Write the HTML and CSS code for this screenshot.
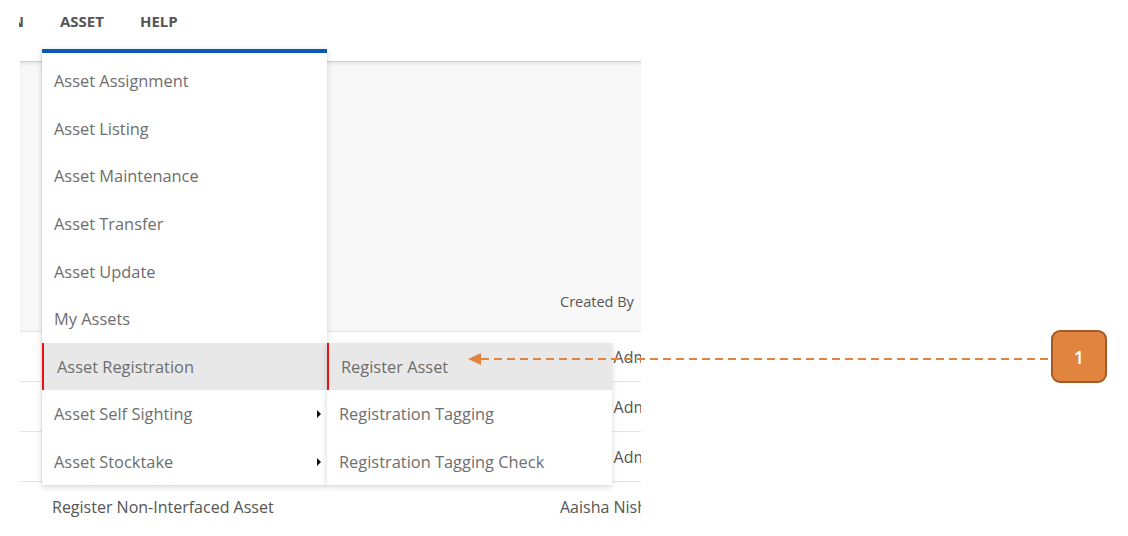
FILE: index.html
```html
<!DOCTYPE html>
<html>
<head>
<meta charset="utf-8">
<link rel="stylesheet" href="styles.css">
</head>
<body>
<div class="page">
  <nav class="topnav">
    <span class="nav-clip"><span>N</span></span>
    <span class="nav-item">ASSET</span>
    <span class="nav-item">HELP</span>
  </nav>

  <section class="panel">
    <div class="panel-head">
      <div class="col-name"></div>
      <div class="col-by">Created By</div>
    </div>
    <div class="row"><div class="col-name">Register Asset</div><div class="col-by">Aaisha Admin</div></div>
    <div class="row"><div class="col-name">Registration Tagging</div><div class="col-by">Aaisha Admin</div></div>
    <div class="row"><div class="col-name">Registration Tagging Check</div><div class="col-by">Aaisha Admin</div></div>
    <div class="row last"><div class="col-name">Register Non-Interfaced Asset</div><div class="col-by">Aaisha Nisha</div></div>
  </section>

  <ul class="menu">
    <li class="item">Asset Assignment</li>
    <li class="item">Asset Listing</li>
    <li class="item">Asset Maintenance</li>
    <li class="item">Asset Transfer</li>
    <li class="item">Asset Update</li>
    <li class="item">My Assets</li>
    <li class="item active">Asset Registration
      <ul class="submenu">
        <li class="item active">Register Asset</li>
        <li class="item">Registration Tagging</li>
        <li class="item">Registration Tagging Check</li>
      </ul>
    </li>
    <li class="item has-sub">Asset Self Sighting<span class="caret"></span></li>
    <li class="item has-sub">Asset Stocktake<span class="caret"></span></li>
  </ul>

  <div class="callout">
    <span class="arrowhead"></span>
    <span class="dash"></span>
    <span class="badge">1</span>
  </div>
</div>
</body>
</html>
```

FILE: styles.css
```css
* { box-sizing: border-box; }
html, body {
  margin: 0;
  padding: 0;
  background: #ffffff;
}
body {
  width: 1128px;
  height: 536px;
  overflow: hidden;
  font-family: "Open Sans", "Noto Sans", sans-serif;
}
.page {
  position: relative;
  width: 1128px;
  height: 536px;
}

/* top navigation */
.topnav {
  height: 41px;
  display: flex;
  align-items: center;
  padding-left: 19px;
  gap: 36px;
  font-weight: 700;
  font-size: 15px;
  color: #555555;
}
.nav-clip {
  display: inline-block;
  width: 5px;
  overflow: hidden;
  direction: rtl;
  white-space: nowrap;
}
.nav-clip span { direction: ltr; }
.nav-item { line-height: 18px; }

/* content panel */
.panel {
  margin-top: 20px;
  margin-left: 20px;
  width: 621px;
  overflow: hidden;
  font-size: 16px;
  color: #555555;
}
.panel-head {
  height: 271px;
  background: #f8f8f8;
  display: flex;
  align-items: flex-end;
  padding-bottom: 20px;
  border-top: 1px solid #d2d2d2;
  border-bottom: 1px solid #e4e4e4;
  box-shadow: inset 0 3px 4px -2px rgba(0,0,0,0.12);
  font-size: 14.5px;
}
.row {
  height: 50px;
  display: flex;
  align-items: center;
  border-bottom: 1px solid #e4e4e4;
  white-space: nowrap;
}
.row.last { border-bottom: none; }
.col-name {
  width: 540px;
  padding-left: 32px;
  flex: none;
}
.col-by {
  flex: none;
  white-space: nowrap;
}

/* dropdown menu */
.menu {
  position: absolute;
  left: 42px;
  top: 49px;
  width: 285px;
  margin: 0;
  padding: 4px 0 0 0;
  list-style: none;
  background: #ffffff;
  border-top: 4px solid #0a5bb8;
  box-shadow: 0 2px 6px rgba(0,0,0,0.16), -1px 0 2px rgba(0,0,0,0.06);
  font-size: 16.4px;
  color: #6e6e6e;
}
.item {
  position: relative;
  height: 47.6px;
  display: flex;
  align-items: center;
  padding-left: 12px;
  white-space: nowrap;
}
.item.active {
  background: #e8e8e8;
  border-left: 2px solid #ee1111;
  padding-left: 13px;
}
.caret {
  position: absolute;
  right: 6px;
  top: 50%;
  margin-top: -4px;
  width: 0;
  height: 0;
  border-top: 4px solid transparent;
  border-bottom: 4px solid transparent;
  border-left: 4px solid #111111;
}

/* submenu */
.submenu {
  position: absolute;
  left: 283px;
  top: 0;
  width: 285px;
  margin: 0;
  padding: 0;
  list-style: none;
  background: #ffffff;
  box-shadow: 0 2px 6px rgba(0,0,0,0.16);
  color: #6e6e6e;
}
.submenu .item { padding-left: 12px; }
.submenu .item.active { padding-left: 12px; }

/* callout */
.callout {
  position: absolute;
  left: 468px;
  top: 330px;
  width: 639px;
  height: 53px;
  display: flex;
  align-items: flex-start;
}
.arrowhead {
  flex: none;
  margin-top: 23px;
  width: 0;
  height: 0;
  border-top: 6px solid transparent;
  border-bottom: 6px solid transparent;
  border-right: 13px solid #e0843f;
}
.dash {
  flex: 1;
  margin-top: 28px;
  height: 2px;
  background: repeating-linear-gradient(to right, #e0843f 0 8px, transparent 8px 13px);
}
.badge {
  flex: none;
  width: 56px;
  height: 53px;
  border-radius: 9px;
  background: #e0843f;
  border: 2px solid #a55a26;
  color: #ffffff;
  font-size: 18px;
  font-weight: 600;
  display: flex;
  align-items: center;
  justify-content: center;
}
```
